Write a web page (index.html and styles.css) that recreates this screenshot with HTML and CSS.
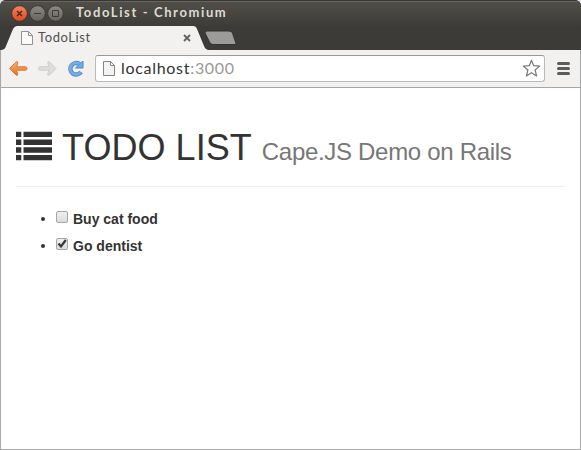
FILE: index.html
```html
<!DOCTYPE html>
<html lang="en">
<head>
<meta charset="utf-8">
<title>TodoList</title>
<link rel="stylesheet" href="styles.css">
</head>
<body>
<div class="window">
  <header class="titlebar">
    <svg class="controls" width="56" height="20" viewBox="0 0 56 20">
      <defs>
        <linearGradient id="red" x2="0" y2="1"><stop stop-color="#f58462"/><stop offset="1" stop-color="#e0481b"/></linearGradient>
        <linearGradient id="grey" x2="0" y2="1"><stop stop-color="#8b8981"/><stop offset="1" stop-color="#65635c"/></linearGradient>
      </defs>
      <circle cx="9.500" cy="10.500" r="7.800" fill="url(#red)" stroke="#33322e" stroke-width=".8"/>
      <path d="M7 8l5 5M12 8l-5 5" stroke="#4a2418" stroke-width="1.400"/>
      <circle cx="27.500" cy="10.500" r="7.800" fill="url(#grey)" stroke="#33322e" stroke-width=".8"/>
      <path d="M24 10.500h7" stroke="#3c3b37"/>
      <circle cx="45.500" cy="10.500" r="7.800" fill="url(#grey)" stroke="#33322e" stroke-width=".8"/>
      <path d="M42.500 7.500h6v6h-6z" fill="none" stroke="#3c3b37"/>
    </svg>
    <span class="window-title">TodoList - Chromium</span>
  </header>
  <nav class="tabstrip">
    <div class="tab">
      <svg class="tab-shape" width="208" height="24" viewBox="0 0 208 24">
        <path d="M0 24C2 24 4 23 5 20L12 3Q13.500 0 16 0H192Q195 0 196 3L203 20Q204.500 24 208 24z" fill="#f2f1f0"/>
      </svg>
      <svg class="page-icon" width="12" height="14" viewBox="0 0 12 14"><path d="M.5.500h7l4 4v9H.5zM7.500.500v4h4" fill="#fafafa" stroke="#929292"/></svg>
      <span class="tab-title">TodoList</span>
      <svg class="tab-close" width="8" height="8" viewBox="0 0 8 8"><path d="M1 1l6 6M7 1L1 7" stroke="#626262" stroke-width="1.800"/></svg>
    </div>
    <svg class="new-tab" width="33" height="16" viewBox="0 0 33 16"><path d="M3.500 1H25Q27.500 1 28.500 3L32.300 14.500H9Q6.500 14.500 5.500 12L1 3Q.5 1 3.500 1z" fill="#9c9b99" stroke="#33322e"/></svg>
  </nav>
  <div class="toolbar">
    <svg class="nav-icons" width="80" height="20" viewBox="0 0 80 20">
      <defs>
        <linearGradient id="orange" x2="0" y2="1"><stop stop-color="#f8b277"/><stop offset="1" stop-color="#e66f24"/></linearGradient>
      </defs>
      <path d="M1.500 9.500L8 3Q9.800 1.800 9.800 4L8.500 7.800H17.500Q19 7.800 19 9.500T17.500 11.200H8.500L9.800 15Q9.800 17.200 8 16z" fill="url(#orange)" stroke="#d97b3c"/>
      <path d="M48 9.500L41.500 3Q39.700 1.800 39.700 4L41 7.800H32Q30.500 7.800 30.500 9.500T32 11.200H41L39.700 15Q39.700 17.200 41.500 16z" fill="#deddda" stroke="#cfcecb"/>
      <path d="M71.500 5A5.800 5.800 0 1 0 73 13" fill="none" stroke="#4f8ac8" stroke-width="4.400"/>
      <path d="M75 2v7h-7.500z" fill="#75ace1" stroke="#4f8ac8"/>
      <path d="M71.500 5A5.800 5.800 0 1 0 72.500 13.300" fill="none" stroke="#75ace1" stroke-width="2.800"/>
    </svg>
    <div class="omnibox">
      <svg class="page-icon" width="12" height="15" viewBox="0 0 12 15"><path d="M.5.500h7l4 4v10H.5zM7.500.500v4h4" fill="#f3f3f3" stroke="#858585"/></svg>
      <span class="url">localhost<span class="port">:3000</span></span>
      <svg class="star" width="19" height="19" viewBox="0 0 19 19"><path d="M9.500 1.200L11.700 6.700L17.700 7.100L13.100 11L14.600 16.900L9.500 13.700L4.400 16.900L5.900 11L1.300 7.100L7.300 6.700z" fill="#fff" stroke="#777" stroke-width="1.200" stroke-linejoin="round"/></svg>
    </div>
    <svg class="menu" width="13" height="13" viewBox="0 0 13 13"><path d="M1.500 1.500h10M1.500 6.500h10M1.500 11.500h10" stroke="#5b5b5b" stroke-width="3" stroke-linecap="round"/></svg>
  </div>
  <main class="page">
    <h1 class="page-header">
      <svg class="list-icon" width="36" height="30" viewBox="0 0 36 30"><path d="M0 .7h5.300v5.300H0zM7.500 .7H36v5.300H7.500zM0 8.600h5.300V14H0zM7.500 8.600H36V14H7.500zM0 16.300h5.300v5.400H0zM7.500 16.300H36v5.400H7.500zM0 24h5.300v5.300H0zM7.500 24H36v5.300H7.500z" fill="#333"/></svg>
      <span class="heading">TODO LIST</span>
      <small>Cape.JS Demo on Rails</small>
    </h1>
    <ul class="todos">
      <li><label><span class="box"></span>Buy cat food</label></li>
      <li><label><span class="box"><svg width="12" height="12" viewBox="0 0 12 12"><path d="M2.500 5.500L5 8.500L9.800 2" fill="none" stroke="#3a3a3a" stroke-width="2.300"/></svg></span>Go dentist</label></li>
    </ul>
  </main>
</div>
</body>
</html>
```
FILE: styles.css
```css
* { box-sizing: border-box; }
body { margin: 0; background: #e4e3e6; font-family: "Liberation Sans", Arial, sans-serif; }
svg { display: block; flex: none; }
.window { height: 450px; display: flex; flex-direction: column; background: #3c3b37; border-radius: 6px 6px 0 0; overflow: hidden; }
.titlebar { height: 26px; flex: none; display: flex; align-items: flex-start; padding: 2px 0 0 10px; background: linear-gradient(#504f49, #3d3c38); border-top: 1px solid #373632; box-shadow: inset 0 1px #66655e; }
.window-title { margin-left: 10px; font: bold 13px/18px Lato, sans-serif; letter-spacing: 1.620px; color: #dfdbd2; white-space: nowrap; }
.tabstrip { height: 24px; flex: none; display: flex; padding-left: 1px; }
.tab { position: relative; width: 206px; height: 24px; display: flex; align-items: center; padding: 0 16px 0 20px; }
.tab-shape { position: absolute; left: 0; top: 0; }
.tab .page-icon, .tab-title, .tab-close { position: relative; }
.tab-title { flex: 1; margin: -2px 0 0 5px; font: 13px/20px Lato, sans-serif; letter-spacing: .6px; color: #505050; }
.new-tab { margin: 4px 0 0 -3px; }
.toolbar { height: 38px; flex: none; display: flex; align-items: center; padding: 0 10px 0 7px; background: #f2f1f0; border: 1px solid #a6a6a6; border-top: 0; }
.omnibox { width: 451px; height: 27px; display: flex; align-items: center; margin-left: 7px; padding: 0 3px 0 7px; background: #fff; border: 1px solid #b9b9b9; border-top-color: #999; border-radius: 3px; }
.url { flex: 1; margin: -2px 0 0 6px; font: 16px/24px Lato, sans-serif; letter-spacing: .7px; color: #333; }
.port { color: #999; }
.menu { margin-left: 12px; }
.page { flex: 1; padding: 40px 15px 0; background: #fff; border: 1px solid #aaa; border-top: 0; color: #333; }
.page-header { height: 59px; display: flex; align-items: baseline; margin: 0; border-bottom: 1px solid #eee; font-size: 36px; font-weight: 400; line-height: 40px; }
.list-icon { align-self: flex-start; margin-top: 3px; }
.heading { margin-left: 10px; letter-spacing: .05px; }
small { margin-left: 10px; font-size: 24px; letter-spacing: -.31px; color: #777; }
.todos { margin: 17px 0 0; padding-left: 40px; font-size: 14px; line-height: 20px; }
.todos li { height: 27px; padding-top: 4px; }
label { display: inline-flex; align-items: center; font-weight: 700; }
.box { width: 12px; height: 12px; margin: -4px 5px 0 0; border: 1px solid #a6a6a6; border-radius: 2px; background: linear-gradient(#eee, #dcdcdc); }
.box svg { margin: -1px; }
```
